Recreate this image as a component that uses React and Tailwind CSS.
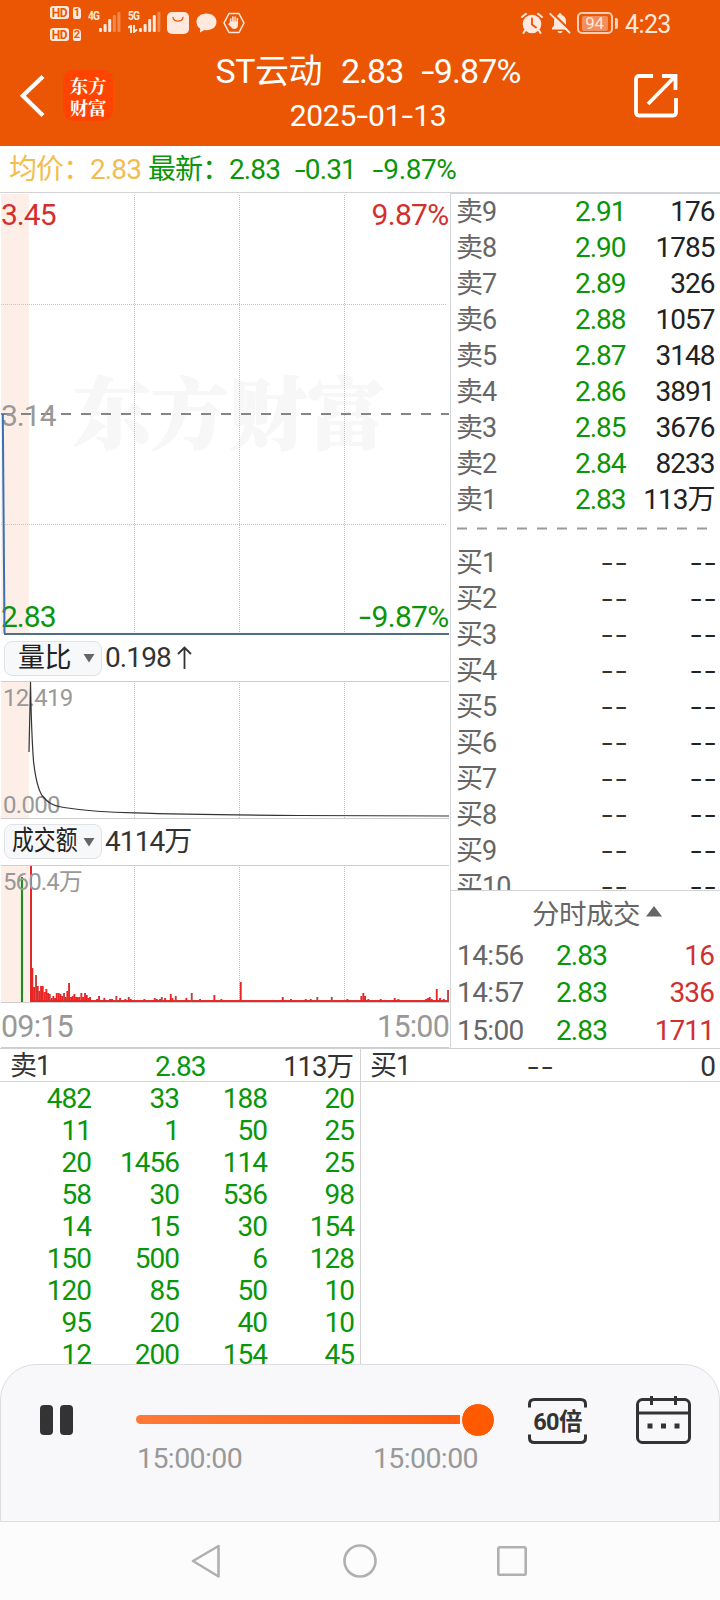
import React from 'react';

const GREEN = '#0a960a';
const LINE = '#cdcdcd';

const sells = [
  ['卖9', '2.91', '176'],
  ['卖8', '2.90', '1785'],
  ['卖7', '2.89', '326'],
  ['卖6', '2.88', '1057'],
  ['卖5', '2.87', '3148'],
  ['卖4', '2.86', '3891'],
  ['卖3', '2.85', '3676'],
  ['卖2', '2.84', '8233'],
  ['卖1', '2.83', '113万'],
];
const buys = [1, 2, 3, 4, 5, 6, 7, 8, 9, 10];
const trades = [
  ['14:56', '2.83', '16'],
  ['14:57', '2.83', '336'],
  ['15:00', '2.83', '1711'],
];
const queue = [
  [482, 33, 188, 20],
  [11, 1, 50, 25],
  [20, 1456, 114, 25],
  [58, 30, 536, 98],
  [14, 15, 30, 154],
  [150, 500, 6, 128],
  [120, 85, 50, 10],
  [95, 20, 40, 10],
  [12, 200, 154, 45],
];

// [x, height, dark]
const bars = [
  [32.3, 34], [34, 15], [36, 27, 1], [37.7, 16], [39.3, 11], [41, 16], [42.7, 16], [44.7, 10], [46.3, 13], [48, 9],
  [49.7, 8, 1], [51.7, 4], [53.3, 6], [55, 4], [56.7, 9], [58.7, 9], [60.3, 8], [62, 6], [64, 9, 1], [65.7, 5],
  [67.3, 11], [69, 19], [71, 5], [72.7, 6], [74.3, 8], [76, 5], [77.7, 5], [79.3, 5], [81.3, 9], [83, 5],
  [85, 9], [86.7, 7], [88.3, 4], [90, 5], [97, 3], [99, 6], [104.3, 4], [110, 3], [112, 3], [116.3, 6, 1],
  [120, 4], [125.3, 3], [128.7, 5], [130.7, 3], [144.3, 3], [154.7, 4], [156.7, 3], [160, 3], [161.7, 5, 1],
  [165, 4], [170.7, 8], [172.3, 4], [175.7, 6, 1], [186.3, 4], [191.7, 9, 1], [200, 3], [214.3, 7], [221.3, 3],
  [240.7, 20], [282.7, 5], [291, 3], [305.7, 3], [310.7, 3], [317.3, 5, 1], [331.7, 5, 1], [347.3, 3],
  [361.3, 6], [363.3, 9], [365, 6], [368.3, 3], [380.7, 3], [394.7, 4], [398.3, 3], [426, 3], [428, 4],
  [429.7, 5], [431.7, 3], [436.7, 13], [440, 4], [443.7, 3], [448, 12, 1],
];

function Dash() {
  return <span className="mx-[2px] inline-block origin-center scale-x-[1.4]">-</span>;
}

function Num({ children, className = '' }) {
  const parts = String(children).split('-');
  return (
    <span className={`whitespace-pre ${className}`}>
      {parts.map((p, i) => (
        <React.Fragment key={i}>
          {i > 0 && <Dash />}
          {p}
        </React.Fragment>
      ))}
    </span>
  );
}

function Blank() {
  return (
    <span className="inline-flex gap-[3px]">
      <Dash />
      <Dash />
    </span>
  );
}

function VGrid({ h }) {
  return (
    <g stroke="#bdbdbd" strokeWidth="1" strokeDasharray="1 1">
      <path d={`M134.5 2V${h}`} />
      <path d={`M239.5 2V${h}`} />
      <path d={`M344.5 2V${h}`} />
    </g>
  );
}

function Signal({ faded }) {
  const hs = [4, 8, 13, 17, 20];
  return (
    <svg width="22" height="20" viewBox="0 0 22 20" fill="#ffe9de">
      {hs.map((h, i) => (
        <rect key={i} x={i * 4.6} y={20 - h} width="3" height={h} rx="1" opacity={i >= faded ? 0.35 : 1} />
      ))}
    </svg>
  );
}

function HdBadge({ n }) {
  return (
    <div className="flex items-center gap-[4px]">
      <span className="flex h-[13px] w-[19px] items-center justify-center rounded-[3px] bg-[#ffe9de] text-[12px] leading-none font-bold tracking-[-0.3px] text-[#ea5604]">HD</span>
      <span className="flex h-[12px] w-[8px] items-center justify-center rounded-[2px] rounded-tr-[4px] bg-[#ffe9de] text-[11px] leading-none font-bold text-[#ea5604]">{n}</span>
    </div>
  );
}

function StatusBar() {
  return (
    <div className="flex h-12 items-start text-[#ffe9de]">
      <div className="mt-[6px] ml-[50px] flex flex-col gap-[9px]">
        <HdBadge n="1" />
        <HdBadge n="2" />
      </div>
      <span className="mt-[10px] ml-[7px] w-[11px] origin-left scale-x-[0.85] text-[12px] leading-none font-bold tracking-[-1px]">4G</span>
      <div className="mt-[12px]"><Signal faded={3} /></div>
      <div className="mt-[10px] ml-[7px] flex w-[11px] flex-col">
        <span className="origin-left scale-x-[0.85] text-[12px] leading-none font-bold tracking-[-1px]">5G</span>
        <svg className="mt-[3px]" width="10" height="8" viewBox="0 0 10 8" stroke="currentColor" strokeWidth="2" fill="none">
          <path d="M0 2.5L3 1V8M6 0V7L9 4.5" />
        </svg>
      </div>
      <div className="mt-[12px]"><Signal faded={4} /></div>
      <svg className="mt-[12px] ml-[6px]" width="22" height="22" viewBox="0 0 22 22">
        <rect width="22" height="22" rx="5" fill="#ffe9de" />
        <path d="M6 5.5C6.8 10.3 15.2 10.3 16 5.5" fill="none" stroke="#ea5604" strokeWidth="1.4" strokeLinecap="round" />
      </svg>
      <svg className="mt-[13px] ml-[7px]" width="21" height="20" viewBox="0 0 21 20" fill="#ffe9de">
        <path d="M10.500 0.500C4.700 0.500 0.500 4 0.500 9C0.500 12 2 14.300 4.300 15.700L4 19.600L8.500 17C14.800 18 20.500 14.500 20.500 9C20.500 4 16.300 0.500 10.500 0.500Z" />
      </svg>
      <svg className="mt-[12px] ml-[6px]" width="22" height="22" viewBox="0 0 22 22" fill="none" stroke="#ffe9de">
        <path d="M6 1.500H16L21 11L16 20.500H6L1 11Z" strokeWidth="1.600" strokeLinejoin="round" />
        <path d="M7.700 11V7M9.900 10V5M12.100 10V5M14.300 11V6.500" strokeWidth="1.500" strokeLinecap="round" />
        <path d="M7 9.500H15V13C15 17.500 9.500 18 8 15L5 12L6.500 11Z" fill="#ffe9de" stroke="none" />
      </svg>
      <svg className="mt-[12px] ml-[276px]" width="22" height="22" viewBox="0 0 22 22">
        <circle cx="11" cy="12" r="9.300" fill="#ffe9de" />
        <path d="M1 5L5 1.800M17 1.800L21 5M4 18.500L2.500 21M18 18.500L19.500 21" stroke="#ffe9de" strokeWidth="2" strokeLinecap="round" />
        <path d="M11 6.500V12.500L15 15.500" fill="none" stroke="#ea5604" strokeWidth="1.900" strokeLinecap="round" />
      </svg>
      <svg className="mt-[12px] ml-[6px]" width="22" height="22" viewBox="0 0 22 22">
        <path d="M3 17.500V16L5 13.500V9C5 5.500 7 3.500 9.300 3C9.300 0.500 12.700 0.500 12.700 3C15 3.500 17 5.500 17 9V13.500L19 16V17.500ZM8.500 19H13.500C13 22 9 22 8.500 19Z" fill="#ffe9de" />
        <path d="M2.500 0.500L21.500 18.500" stroke="#ea5604" strokeWidth="2.200" />
        <path d="M1.200 1.800L20.500 20.500" stroke="#ffe9de" strokeWidth="1.800" strokeLinecap="round" />
      </svg>
      <div className="mt-[12px] ml-[6px] flex items-center">
        <div className="flex h-[22px] w-[36px] items-center justify-center rounded-[5px] border-2 border-[#ffcdb5]">
          <div className="mr-[1px] flex h-[15px] w-[26px] items-center justify-center rounded-[2px] bg-[#f28e5b] text-[17px] leading-none tracking-[-0.3px]">94</div>
        </div>
        <div className="ml-[2px] h-[11px] w-[3px] rounded-r-[2px] bg-[#ffd2bd]" />
      </div>
      <span className="mt-[12px] ml-[7px] text-[25px] leading-none tracking-[-0.6px]">4:23</span>
    </div>
  );
}

function Header() {
  return (
    <header className="h-[146px] bg-[#ea5604] text-white">
      <StatusBar />
      <div className="flex h-[98px] items-start">
        <svg className="mt-[27px] ml-[20px]" width="25" height="42" viewBox="0 0 25 42" fill="none" stroke="#fff" strokeWidth="4.200">
          <path d="M23 1.500L2.800 20.800L23 40.500" />
        </svg>
        <div className="mt-[22px] ml-[18px] flex h-[51px] w-[50px] flex-col items-center justify-center rounded-[10px] bg-[#ff4400] font-['Noto_Serif_CJK_SC','Noto_Sans_CJK_SC',sans-serif] text-[18.500px] leading-[22px] font-bold tracking-[-0.3px]">
          <span>东方</span>
          <span>财富</span>
        </div>
        <div className="ml-[85px] flex w-[340px] flex-col items-center">
          <div className="mt-[2px] flex h-[42px] items-center text-[34px] leading-none whitespace-pre">
            <span className="tracking-[-0.5px]">ST云动</span>
            <Num className="ml-[19px] tracking-[-1px]">2.83</Num>
            <Num className="ml-[18px] tracking-[-0.9px]">-9.87%</Num>
          </div>
          <div className="mt-[3px] flex h-[42px] items-center text-[30px] leading-none">
            <Num className="tracking-[-0.3px]">2025-01-13</Num>
          </div>
        </div>
        <svg className="mt-[25px] ml-[96px]" width="44" height="45" viewBox="0 0 44 45" fill="none" stroke="#fff" strokeWidth="3.800">
          <path d="M19 3H5C3 3 2 4 2 6V39C2 41 3 42.500 5 42.500H39C41 42.500 42 41 42 39V25" />
          <path d="M28 3H41.500V17M41 3.500L14 31" />
        </svg>
      </div>
    </header>
  );
}

function Quote() {
  return (
    <div className="flex h-[46px] items-center pt-[2px] text-[28px] leading-none tracking-[-0.900px] text-[#0a960a]">
      <span className="ml-[9px] w-[81px] whitespace-nowrap text-[#f2bd4f]">均价：</span>
      <Num className="w-[58px] text-[#f2bd4f]">2.83</Num>
      <span className="w-[81px] whitespace-nowrap">最新：</span>
      <Num className="w-[65px]">2.83</Num>
      <Num className="w-[78px]">-0.31</Num>
      <Num className="tracking-[-0.4px]">-9.87%</Num>
    </div>
  );
}

function Picker({ label, wide, value }) {
  return (
    <>
      <div className="ml-[4px] flex h-[35px] w-[98px] items-center justify-between rounded-[8px] border border-[#e0e2e6] bg-[#f7f8fa] pr-[6px] text-[#222]">
        <span className={wide ? 'ml-[7px] w-[66px] origin-left scale-x-[0.81] text-[27px] leading-none whitespace-nowrap' : 'ml-[13px] text-[27px] leading-none tracking-[-0.5px] whitespace-nowrap'}>{label}</span>
        <svg width="12" height="10" viewBox="0 0 12 10"><path d="M0.500 1H11.500L6 9.500Z" fill="#666" /></svg>
      </div>
      <span className="ml-[3px] flex items-center text-[28px] leading-none tracking-[-0.9px] text-[#333]">{value}</span>
    </>
  );
}

function PriceChart() {
  return (
    <svg className="block" width="450" height="443" viewBox="0 0 450 443">
      <rect x="1" y="1" width="28" height="440" fill="#fdeee8" />
      <text x="73" y="250" fontSize="78" fontWeight="900" fill="#f7f7f7" stroke="#f7f7f7" strokeWidth="1.500" className="font-['Noto_Serif_CJK_SC','Noto_Sans_CJK_SC',sans-serif]">东方财富</text>
      <VGrid h={440} />
      <path d="M1 111.500H447M1 331.500H447" stroke="#c4c4c4" strokeDasharray="1 1" />
      <path d="M1 221H449" stroke="#858585" strokeWidth="2" strokeDasharray="10 10" />
      <g fontSize="30" letterSpacing="-1">
        <text x="1" y="32" fill="#d42f2f">3.45</text>
        <text x="448.500" y="32" fill="#d42f2f" textAnchor="end" letterSpacing="-0.700">9.87%</text>
        <text x="1" y="233" fill="#999">3.14</text>
        <text x="1" y="434" fill={GREEN}>2.83</text>
        <text x="448.500" y="434" fill={GREEN} textAnchor="end" letterSpacing="-0.700">9.87%</text>
      </g>
      <text x="359" y="434" fontSize="30" fill={GREEN} textLength="12" lengthAdjust="spacingAndGlyphs">-</text>
      <path d="M2.800 221L4.500 440.500" fill="none" stroke="#3a70b5" strokeWidth="2" />
      <path d="M4 441H449" stroke="#4d7088" strokeWidth="2" />
    </svg>
  );
}

function RatioChart() {
  return (
    <svg className="block" width="450" height="138" viewBox="0 0 450 138">
      <rect x="1" y="1" width="28" height="136" fill="#fdeee8" />
      <VGrid h={137} />
      <path d="M1 0.500H449M1 137.500H449" stroke={LINE} />
      <g fontSize="24" letterSpacing="-0.700" fill="#999">
        <text x="3" y="25">12.419</text>
        <text x="3" y="132">0.000</text>
      </g>
      <path d="M29 71L30.500 1C31 30 32 60 33.500 80C35.500 98 38 108 42 114.500C48 121.500 52 125 64 126.500C80 129 105 131.500 134 131.800C180 133.300 240 134 300 134.500C350 135 400 135 449 135" fill="none" stroke="#333" strokeWidth="1.200" />
    </svg>
  );
}

function VolumeChart() {
  return (
    <svg className="block" width="450" height="138" viewBox="0 0 450 138">
      <rect x="1" y="1" width="28" height="136" fill="#fdeee8" />
      <VGrid h={137} />
      <path d="M1 0.500H449M1 137.500H449" stroke={LINE} />
      <rect x="20" y="13" width="4" height="124" fill="#dff3c8" />
      <rect x="21" y="12" width="2" height="125" fill="#2b852b" />
      <rect x="30" y="1" width="2" height="136" fill="#e32626" />
      <rect x="30" y="135" width="419" height="2" fill="#e82a2a" />
      {bars.map(([x, h, dark], i) => (
        <rect key={i} x={x - 0.9} y={137 - h} width="1.900" height={h} fill={dark ? '#b84444' : '#ec2424'} />
      ))}
      <text x="3" y="25" fontSize="24" letterSpacing="-0.900" fill="#999">560.4万</text>
    </svg>
  );
}

function Charts() {
  return (
    <div className="w-[450px] border-t border-[#d3d3d6]">
      <PriceChart />
      <div className="flex h-[45px] items-center pb-[1px]">
        <Picker
          label="量比"
          value={
            <>
              0.198
              <svg className="ml-[6px]" width="15" height="24" viewBox="0 0 15 24" fill="none" stroke="#333" strokeWidth="1.800"><path d="M7.500 23V1.500M1 8L7.500 1.500L14 8" /></svg>
            </>
          }
        />
      </div>
      <RatioChart />
      <div className="flex h-[46px] items-center pb-[1px]">
        <Picker label="成交额" wide value="4114万" />
      </div>
      <VolumeChart />
      <div className="mx-[1px] flex h-[45px] items-center justify-between border-b border-[#cdcdcd] pt-[4px] text-[30.500px] leading-none tracking-[-0.8px] text-[#999]">
        <span>09:15</span>
        <span>15:00</span>
      </div>
    </div>
  );
}

function BookRow({ label, price, qty }) {
  return (
    <div className="flex h-9 shrink-0 items-center text-[28px] leading-none tracking-[-1px]">
      <span className="w-[70px] text-[27px] text-[#666]">{label}</span>
      <span className="w-[99.500px] text-right text-[#0a960a]">{price}</span>
      <span className="w-[89px] text-right text-[#222]">{qty}</span>
    </div>
  );
}

function OrderBook() {
  return (
    <div className="flex w-[270px] flex-col border-t-2 border-l border-[#d3d5da]">
      <div className="flex h-[696px] shrink-0 flex-col overflow-hidden pl-[5px]">
        {sells.map(([l, p, q]) => (
          <BookRow key={l} label={l} price={p} qty={q} />
        ))}
        <svg className="block shrink-0" width="263" height="27" viewBox="0 0 263 27">
          <path d="M1 10.500H251" stroke="#999" strokeWidth="2" strokeDasharray="10 10" />
        </svg>
        {buys.map((n) => (
          <BookRow key={n} label={`买${n}`} price={<span className="text-[#333]"><Blank /></span>} qty={<Blank />} />
        ))}
      </div>
      <div className="h-[158px] shrink-0 border-t border-[#d3d3d3] pl-[6px]">
        <div className="flex h-[46px] items-center pt-[1px] text-[27.500px] leading-none tracking-[-0.500px] text-[#666]">
          <span className="ml-[75px]">分时成交</span>
          <svg className="mb-[7px] ml-[6px]" width="16" height="11" viewBox="0 0 16 11"><path d="M8 0L16 10.500H0Z" fill="#666" /></svg>
        </div>
        {trades.map(([t, p, q]) => (
          <div key={t} className="flex h-[37.500px] items-center text-[28px] leading-none tracking-[-0.900px]">
            <span className="w-[99px] tracking-[-0.6px] text-[#666]">{t}</span>
            <span className="w-[60px] text-[#0a960a]">{p}</span>
            <span className="w-[98px] text-right text-[#cf3030]">{q}</span>
          </div>
        ))}
      </div>
    </div>
  );
}

function Queue() {
  return (
    <div className="flex h-[316px] overflow-hidden border-t border-[#cfd0d2] text-[28px] leading-none tracking-[-1px]">
      <div className="w-[361px] border-r border-[#d3d3d6]">
        <div className="flex h-[33px] items-center border-b border-[#d3d3d6] pt-[3px] text-[#333]">
          <span className="ml-[10px] w-[145px] text-[27px]">卖1</span>
          <span className="w-[60px] text-[#0a960a]">2.83</span>
          <span className="w-[138px] text-right text-[27.500px]">113万</span>
        </div>
        {queue.map((row, i) => (
          <div key={i} className="grid h-8 grid-cols-[91px_88px_88px_87px] items-center pt-[2px] text-right text-[#0a960a]">
            {row.map((v, j) => (
              <span key={j}>{v}</span>
            ))}
          </div>
        ))}
      </div>
      <div className="flex-1">
        <div className="flex h-[33px] items-center border-b border-[#d3d3d6] pt-[3px] text-[#333]">
          <span className="ml-[9px] w-[157px] text-[27px]">买1</span>
          <Blank />
          <span className="mr-[5px] ml-auto">0</span>
        </div>
      </div>
    </div>
  );
}

function Player() {
  return (
    <div className="h-[158px] rounded-t-[36px] border border-[#dedede] bg-[#f8f8fb]">
      <div className="flex items-start">
        <div className="mt-[40px] ml-[39px] flex w-[96px] gap-[7px]">
          <i className="h-[30px] w-[13px] rounded-[4px] bg-[#333]" />
          <i className="h-[30px] w-[13px] rounded-[4px] bg-[#333]" />
        </div>
        <div className="w-[361px]">
          <div className="mt-[38px] flex h-[34px] items-center">
            <div className="mb-[1px] h-[9px] w-[324px] rounded-l-full bg-linear-to-r from-[#ff7935] to-[#ff5d10]" />
            <div className="ml-[1px] h-[34px] w-[34px] rounded-full border border-white bg-[#ff5a00]" />
          </div>
          <div className="mt-[8px] flex w-[342px] justify-between pl-[1px] text-[28.500px] leading-none tracking-[-0.600px] text-[#999]">
            <span>15:00:00</span>
            <span>15:00:00</span>
          </div>
        </div>
        <div className="mt-[33px] ml-[31px] flex h-[46px] w-[59px] flex-col justify-between">
          <svg width="59" height="10" viewBox="0 0 59 10" fill="none" stroke="#333" strokeWidth="3"><path d="M1.500 9.500V6Q1.500 1.500 6.500 1.500H52.500Q57.500 1.500 57.500 6V9.500" /></svg>
          <span className="pt-[2px] text-center text-[23.500px] leading-[24px] font-bold tracking-[-0.7px] whitespace-nowrap text-[#333]">60倍</span>
          <svg width="59" height="10" viewBox="0 0 59 10" fill="none" stroke="#333" strokeWidth="3"><path d="M1.500 0.500V4Q1.500 8.500 6.500 8.500H52.500Q57.500 8.500 57.500 4V0.500" /></svg>
        </div>
        <svg className="mt-[31px] ml-[49px]" width="55" height="48" viewBox="0 0 55 48" fill="none" stroke="#333" strokeWidth="3">
          <rect x="1.500" y="3.500" width="52" height="43" rx="5" />
          <path d="M2 17H53M15.500 0V9M39.500 0V9" />
          <path d="M11.500 30H16.500M25 30H30M38.500 30H43.500" strokeWidth="5" />
        </svg>
      </div>
    </div>
  );
}

function NavBar() {
  return (
    <div className="flex h-[78px] items-start bg-[#fcfcfc]">
      <svg className="mt-[21px] ml-[190px]" width="32" height="36" viewBox="0 0 32 36" fill="none" stroke="#b0b0b0" strokeWidth="2.600" strokeLinejoin="round"><path d="M28.500 3V33.500L3 18Z" /></svg>
      <svg className="mt-[22px] ml-[121px]" width="34" height="34" viewBox="0 0 34 34" fill="none" stroke="#b0b0b0" strokeWidth="2.600"><circle cx="17" cy="17" r="15.500" /></svg>
      <svg className="mt-[24px] ml-[120px]" width="30" height="30" viewBox="0 0 30 30" fill="none" stroke="#b0b0b0" strokeWidth="2.600"><rect x="1.300" y="1.300" width="27.400" height="27.400" rx="1.500" /></svg>
    </div>
  );
}

export default function App() {
  return (
    <div className="h-[1600px] w-[720px] overflow-hidden bg-white font-[Roboto,'Noto_Sans_CJK_SC',sans-serif]">
      <Header />
      <Quote />
      <div className="flex h-[856px]">
        <Charts />
        <OrderBook />
      </div>
      <Queue />
      <Player />
      <NavBar />
    </div>
  );
}
